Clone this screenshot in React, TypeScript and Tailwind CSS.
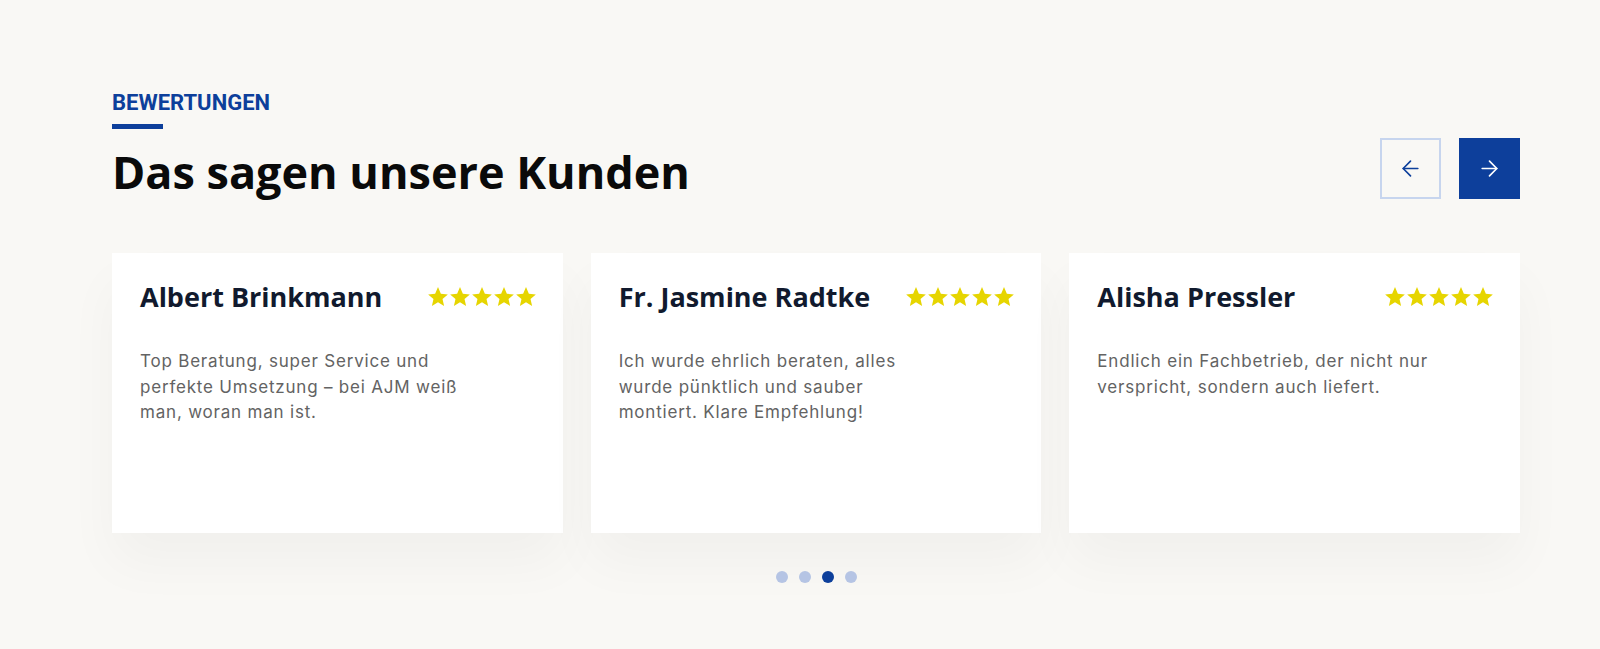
import { ArrowLeft, ArrowRight } from 'lucide-react';

type Review = {
  name: string;
  lines: string[];
};

const reviews: Review[] = [
  {
    name: 'Albert Brinkmann',
    lines: [
      'Top Beratung, super Service und',
      'perfekte Umsetzung – bei AJM weiß',
      'man, woran man ist.',
    ],
  },
  {
    name: 'Fr. Jasmine Radtke',
    lines: [
      'Ich wurde ehrlich beraten, alles',
      'wurde pünktlich und sauber',
      'montiert. Klare Empfehlung!',
    ],
  },
  {
    name: 'Alisha Pressler',
    lines: ['Endlich ein Fachbetrieb, der nicht nur', 'verspricht, sondern auch liefert.'],
  },
];

function Star() {
  return (
    <svg viewBox="2 2 20 19.3" className="h-[19px] w-5" fill="#e6d500">
      <path d="M12 2l2.9 6.9 7.1.6-5.4 4.7 1.6 7-6.2-3.8-6.2 3.8 1.6-7L2 9.5l7.1-.6z" />
    </svg>
  );
}

function ReviewCard({ name, lines }: Review) {
  return (
    <div className="h-[280px] bg-white p-7 shadow-[0_30px_50px_rgba(0,0,0,0.035)]">
      <div className="flex items-center justify-between">
        <h3 className="font-['Open_Sans',sans-serif] text-[27px] font-bold leading-[31px] text-[#111a2e]">
          {name}
        </h3>
        <div className="mr-[-1px] flex gap-[2px]">
          {[0, 1, 2, 3, 4].map((i) => (
            <Star key={i} />
          ))}
        </div>
      </div>
      <p className="mt-[37px] font-['Inter',sans-serif] text-[17px] leading-[25.5px] tracking-[0.8px] text-[#636363]">
        {lines.map((line) => (
          <span key={line} className="block">
            {line}
          </span>
        ))}
      </p>
    </div>
  );
}

export default function App() {
  const activeDot = 2;

  return (
    <div className="min-h-screen bg-[#f9f8f5] pl-[112px] pt-[90px]">
      <div className="w-[1408px]">
        <div className="flex items-end justify-between">
          <div>
            <div className="font-['Roboto',sans-serif] text-[22px] font-bold leading-[26px] text-[#0d3f9b]">
              BEWERTUNGEN
            </div>
            <div className="mt-2 h-[5px] w-[51px] bg-[#0d3f9b]" />
            <h2 className="mt-4 font-['Open_Sans',sans-serif] text-[45px] font-bold leading-[54px] text-[#0a0a0a]">
              Das sagen unsere Kunden
            </h2>
          </div>
          <div className="flex gap-[18px]">
            <button className="flex h-[61px] w-[61px] items-center justify-center border-2 border-[#c7d5ee] text-[#0d3f9b]">
              <ArrowLeft size={25} strokeWidth={1.6} />
            </button>
            <button className="flex h-[61px] w-[61px] items-center justify-center bg-[#0d3f9b] text-white">
              <ArrowRight size={25} strokeWidth={1.6} />
            </button>
          </div>
        </div>

        <div className="mt-[54px] grid grid-cols-3 gap-7">
          {reviews.map((review) => (
            <ReviewCard key={review.name} {...review} />
          ))}
        </div>

        <div className="mt-[38px] flex justify-center gap-[11px]">
          {[0, 1, 2, 3].map((i) => (
            <span
              key={i}
              className={
                i === activeDot
                  ? 'h-3 w-3 rounded-full bg-[#0d3f9b]'
                  : 'h-3 w-3 rounded-full bg-[#b5c4e4]'
              }
            />
          ))}
        </div>
      </div>
    </div>
  );
}
